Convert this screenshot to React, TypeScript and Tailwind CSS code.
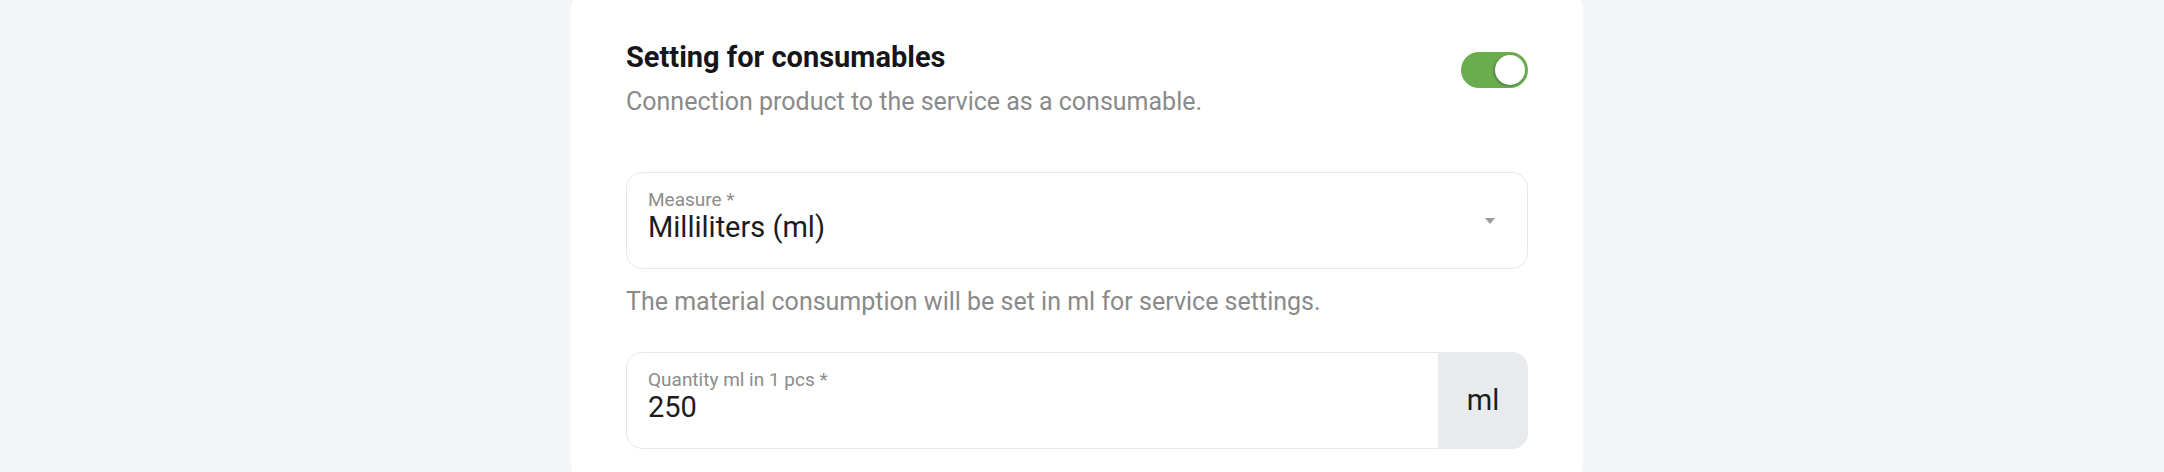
export default function App() {
  return (
    <div className="h-[472px] overflow-hidden bg-[#f4f5f7] font-['Roboto',sans-serif]">
      {/* Card */}
      <div className="ml-[571px] w-[1012px] -mt-[14px] rounded-3xl bg-white pt-[55px] px-[55px] pb-10">
        {/* Header */}
        <div className="flex items-start justify-between">
          <div>
            <h2 className="text-[29px] leading-[32px] font-bold text-[#16161a]">Setting for consumables</h2>
            <p className="mt-[14px] text-[25px] leading-[30px] text-[#8a8a8a]">
              Connection product to the service as a consumable.
            </p>
          </div>
          <button className="mt-[11px] flex h-[36px] w-[67px] items-center justify-end rounded-full bg-[#6aad4f] pr-[3px]">
            <span className="h-[30px] w-[30px] rounded-full bg-white shadow-[-1px_1px_3px_rgba(0,0,0,0.3)]"></span>
          </button>
        </div>

        {/* Measure select */}
        <div className="mt-[55px] flex h-[97px] items-center rounded-[16px] border border-[#e7e7e9] pl-[21px] pr-[32px]">
          <div className="flex-1 pb-[10px]">
            <div className="text-[19px] leading-[22px] text-[#8c8c8c]">Measure *</div>
            <div className="text-[29px] leading-[32px] text-[#1c1c1e]">Milliliters (ml)</div>
          </div>
          <svg width="10" height="6" viewBox="0 0 10 6">
            <path d="M0 0 L10 0 L5 6 Z" fill="#9b9b9b" />
          </svg>
        </div>

        <p className="mt-[18px] text-[25px] leading-[30px] text-[#8a8a8a]">
          The material consumption will be set in ml for service settings.
        </p>

        {/* Quantity input */}
        <div className="mt-[35px] flex h-[97px] rounded-[16px] border border-[#e7e7e9]">
          <div className="flex flex-1 flex-col justify-center pl-[21px] pb-[10px]">
            <div className="text-[19px] leading-[22px] text-[#8c8c8c]">Quantity ml in 1 pcs *</div>
            <div className="text-[29px] leading-[32px] text-[#1c1c1e]">250</div>
          </div>
          <div className="-my-px -mr-px flex w-[90px] items-center justify-center rounded-r-[16px] bg-[#e9eaee] text-[29px] text-[#1c1c1e]">
            ml
          </div>
        </div>
      </div>
    </div>
  );
}
